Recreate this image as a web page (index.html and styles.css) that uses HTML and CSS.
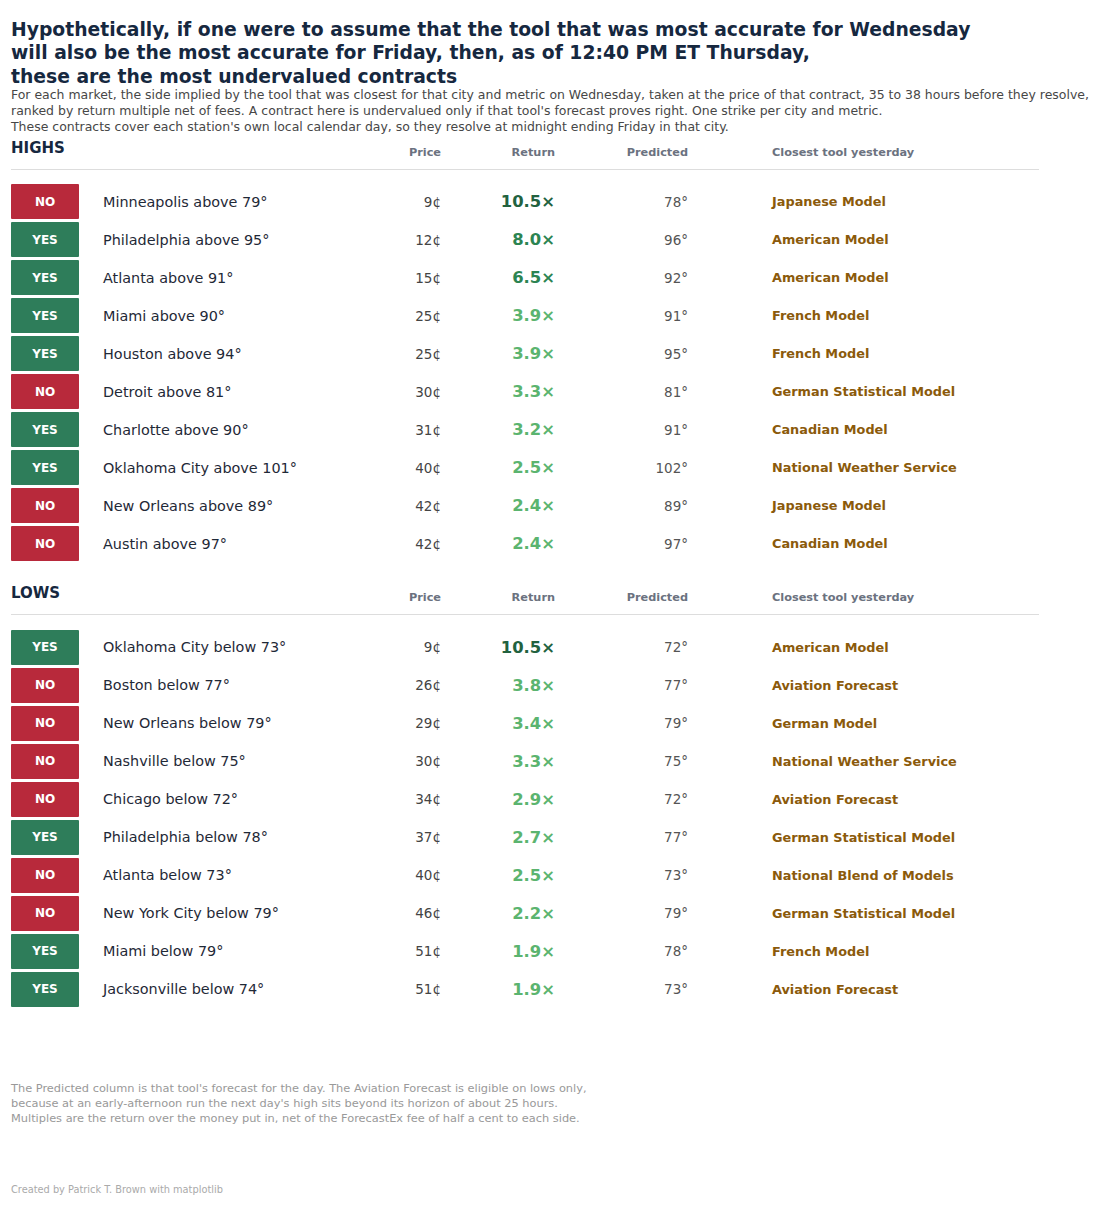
FILE: index.html
```html
<!DOCTYPE html>
<html lang="en">
<head>
<meta charset="utf-8">
<title>Undervalued contracts</title>
<link rel="stylesheet" href="styles.css">
</head>
<body>
<div class="page">
  <h1 class="title">Hypothetically, if one were to assume that the tool that was most accurate for Wednesday<br>will also be the most accurate for Friday, then, as of 12:40 PM ET Thursday,<br>these are the most undervalued contracts</h1>
  <p class="subtitle">For each market, the side implied by the tool that was closest for that city and metric on Wednesday, taken at the price of that contract, 35 to 38 hours before they resolve,<br>ranked by return multiple net of fees. A contract here is undervalued only if that tool's forecast proves right. One strike per city and metric.<br>These contracts cover each station's own local calendar day, so they resolve at midnight ending Friday in that city.</p>

  <section class="section">
    <div class="grid head">
      <div class="sec-title">HIGHS</div>
      <div class="col-h num">Price</div>
      <div class="col-h num">Return</div>
      <div class="col-h num">Predicted</div>
      <div class="col-h tool-h">Closest tool yesterday</div>
    </div>
    <div class="rows">
      <div class="grid row"><div class="bcell"><span class="badge no">NO</span></div><div class="city">Minneapolis above 79°</div><div class="price">9¢</div><div class="ret r1">10.5×</div><div class="pred">78°</div><div class="tool">Japanese Model</div></div>
      <div class="grid row"><div class="bcell"><span class="badge yes">YES</span></div><div class="city">Philadelphia above 95°</div><div class="price">12¢</div><div class="ret r2">8.0×</div><div class="pred">96°</div><div class="tool">American Model</div></div>
      <div class="grid row"><div class="bcell"><span class="badge yes">YES</span></div><div class="city">Atlanta above 91°</div><div class="price">15¢</div><div class="ret r2">6.5×</div><div class="pred">92°</div><div class="tool">American Model</div></div>
      <div class="grid row"><div class="bcell"><span class="badge yes">YES</span></div><div class="city">Miami above 90°</div><div class="price">25¢</div><div class="ret r3">3.9×</div><div class="pred">91°</div><div class="tool">French Model</div></div>
      <div class="grid row"><div class="bcell"><span class="badge yes">YES</span></div><div class="city">Houston above 94°</div><div class="price">25¢</div><div class="ret r3">3.9×</div><div class="pred">95°</div><div class="tool">French Model</div></div>
      <div class="grid row"><div class="bcell"><span class="badge no">NO</span></div><div class="city">Detroit above 81°</div><div class="price">30¢</div><div class="ret r3">3.3×</div><div class="pred">81°</div><div class="tool">German Statistical Model</div></div>
      <div class="grid row"><div class="bcell"><span class="badge yes">YES</span></div><div class="city">Charlotte above 90°</div><div class="price">31¢</div><div class="ret r3">3.2×</div><div class="pred">91°</div><div class="tool">Canadian Model</div></div>
      <div class="grid row"><div class="bcell"><span class="badge yes">YES</span></div><div class="city">Oklahoma City above 101°</div><div class="price">40¢</div><div class="ret r3">2.5×</div><div class="pred">102°</div><div class="tool">National Weather Service</div></div>
      <div class="grid row"><div class="bcell"><span class="badge no">NO</span></div><div class="city">New Orleans above 89°</div><div class="price">42¢</div><div class="ret r3">2.4×</div><div class="pred">89°</div><div class="tool">Japanese Model</div></div>
      <div class="grid row"><div class="bcell"><span class="badge no">NO</span></div><div class="city">Austin above 97°</div><div class="price">42¢</div><div class="ret r3">2.4×</div><div class="pred">97°</div><div class="tool">Canadian Model</div></div>
    </div>
  </section>

  <section class="section lows">
    <div class="grid head">
      <div class="sec-title">LOWS</div>
      <div class="col-h num">Price</div>
      <div class="col-h num">Return</div>
      <div class="col-h num">Predicted</div>
      <div class="col-h tool-h">Closest tool yesterday</div>
    </div>
    <div class="rows">
      <div class="grid row"><div class="bcell"><span class="badge yes">YES</span></div><div class="city">Oklahoma City below 73°</div><div class="price">9¢</div><div class="ret r1">10.5×</div><div class="pred">72°</div><div class="tool">American Model</div></div>
      <div class="grid row"><div class="bcell"><span class="badge no">NO</span></div><div class="city">Boston below 77°</div><div class="price">26¢</div><div class="ret r3">3.8×</div><div class="pred">77°</div><div class="tool">Aviation Forecast</div></div>
      <div class="grid row"><div class="bcell"><span class="badge no">NO</span></div><div class="city">New Orleans below 79°</div><div class="price">29¢</div><div class="ret r3">3.4×</div><div class="pred">79°</div><div class="tool">German Model</div></div>
      <div class="grid row"><div class="bcell"><span class="badge no">NO</span></div><div class="city">Nashville below 75°</div><div class="price">30¢</div><div class="ret r3">3.3×</div><div class="pred">75°</div><div class="tool">National Weather Service</div></div>
      <div class="grid row"><div class="bcell"><span class="badge no">NO</span></div><div class="city">Chicago below 72°</div><div class="price">34¢</div><div class="ret r3">2.9×</div><div class="pred">72°</div><div class="tool">Aviation Forecast</div></div>
      <div class="grid row"><div class="bcell"><span class="badge yes">YES</span></div><div class="city">Philadelphia below 78°</div><div class="price">37¢</div><div class="ret r3">2.7×</div><div class="pred">77°</div><div class="tool">German Statistical Model</div></div>
      <div class="grid row"><div class="bcell"><span class="badge no">NO</span></div><div class="city">Atlanta below 73°</div><div class="price">40¢</div><div class="ret r3">2.5×</div><div class="pred">73°</div><div class="tool">National Blend of Models</div></div>
      <div class="grid row"><div class="bcell"><span class="badge no">NO</span></div><div class="city">New York City below 79°</div><div class="price">46¢</div><div class="ret r3">2.2×</div><div class="pred">79°</div><div class="tool">German Statistical Model</div></div>
      <div class="grid row"><div class="bcell"><span class="badge yes">YES</span></div><div class="city">Miami below 79°</div><div class="price">51¢</div><div class="ret r3">1.9×</div><div class="pred">78°</div><div class="tool">French Model</div></div>
      <div class="grid row"><div class="bcell"><span class="badge yes">YES</span></div><div class="city">Jacksonville below 74°</div><div class="price">51¢</div><div class="ret r3">1.9×</div><div class="pred">73°</div><div class="tool">Aviation Forecast</div></div>
    </div>
  </section>

  <p class="footnote">The Predicted column is that tool's forecast for the day. The Aviation Forecast is eligible on lows only,<br>because at an early-afternoon run the next day's high sits beyond its horizon of about 25 hours.<br>Multiples are the return over the money put in, net of the ForecastEx fee of half a cent to each side.</p>
  <p class="credit">Created by Patrick T. Brown with matplotlib</p>
</div>
</body>
</html>
```

FILE: styles.css
```css
html, body {
  margin: 0;
  padding: 0;
  background: #ffffff;
}
body {
  font-family: "DejaVu Sans", "Liberation Sans", sans-serif;
  color: #1f2937;
}
.page {
  width: 1100px;
  padding: 18px 0 0 11px;
  box-sizing: border-box;
}
.title {
  margin: 0;
  font-size: 18.75px;
  line-height: 23.3px;
  font-weight: bold;
  color: #16283f;
  white-space: nowrap;
}
.subtitle {
  margin: -1px 0 0 0;
  font-size: 12.48px;
  line-height: 16px;
  color: #474747;
  white-space: nowrap;
}
.section {
  width: 1028px;
  margin-top: 4px;
}
.section.lows {
  margin-top: 23px;
}
.grid {
  display: grid;
  grid-template-columns: 92px 238px 100px 114px 133px 1fr;
  align-items: center;
}
.head {
  height: 30px;
  border-bottom: 1.5px solid #dddddd;
  align-items: start;
}
.sec-title {
  grid-column: 1 / 3;
  font-size: 15px;
  line-height: 18px;
  font-weight: bold;
  color: #16283f;
}
.col-h {
  font-size: 11.3px;
  line-height: 14px;
  font-weight: bold;
  color: #6b7280;
  padding-top: 7px;
}
.num {
  text-align: right;
}
.tool-h {
  padding-left: 84px;
}
.rows {
  display: flex;
  flex-direction: column;
  gap: 3px;
  padding-top: 14.5px;
}
.row {
  height: 35px;
}
.badge {
  display: flex;
  align-items: center;
  justify-content: center;
  width: 68px;
  height: 35px;
  font-size: 12px;
  font-weight: bold;
  color: #ffffff;
  border-radius: 1px;
}
.badge.no {
  background: #b8293b;
}
.badge.yes {
  background: #2e7d5a;
}
.city {
  font-size: 14.4px;
  color: #1f2937;
  white-space: nowrap;
}
.price {
  font-size: 13.5px;
  color: #444444;
  text-align: right;
}
.ret {
  font-size: 16.4px;
  font-weight: bold;
  text-align: right;
}
.r1 { color: #22623f; }
.r2 { color: #2c8452; }
.r3 { color: #5bb46f; }
.pred {
  font-size: 13.5px;
  color: #555555;
  text-align: right;
}
.tool {
  padding-left: 84px;
  font-size: 12.85px;
  font-weight: bold;
  color: #8b5a0b;
  white-space: nowrap;
}
.footnote {
  margin: 74px 0 0 0;
  font-size: 11.37px;
  line-height: 15px;
  color: #999999;
  white-space: nowrap;
}
.credit {
  margin: 58px 0 0 0;
  font-size: 9.8px;
  line-height: 12px;
  color: #aaaaaa;
}
```
